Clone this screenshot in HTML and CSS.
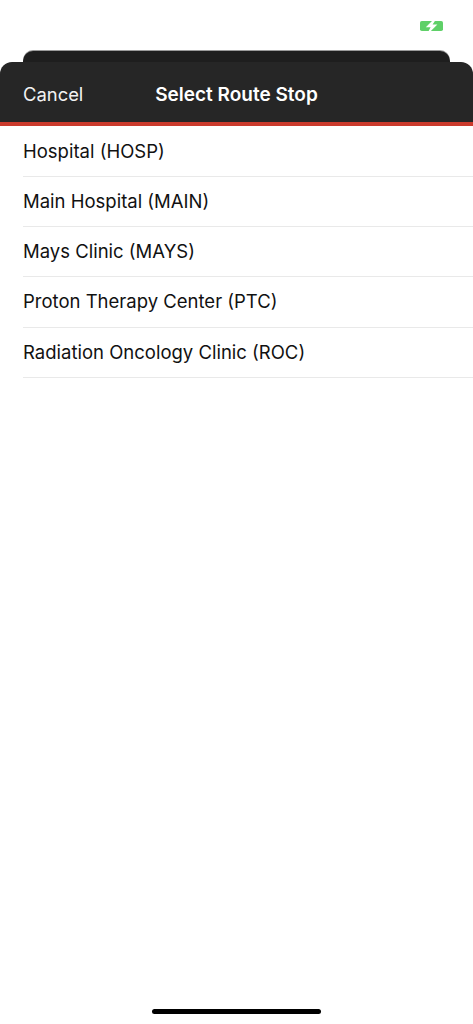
FILE: index.html
```html
<!DOCTYPE html>
<html lang="en">
<head>
    <meta charset="UTF-8">
    <meta name="viewport" content="width=device-width, initial-scale=1.0">
    <title>Select Route Stop</title>
    <link rel="stylesheet" href="styles.css">
</head>
<body>
    <div class="screen">
        <div class="status-bar">
            <svg class="battery" width="23" height="10" viewBox="0 0 23 10">
                <rect x="0" y="0" width="23" height="10" rx="1.8" fill="#5fd068"/>
                <path d="M12.5 -0.5 L5.8 6.2 H10.6 L8.4 10.5 H10.4 L17.4 3.6 H12.6 L15.2 -0.5 Z" fill="#fff"/>
            </svg>
        </div>
        <div class="sheet-behind"></div>
        <div class="sheet-header">
            <span class="cancel">Cancel</span>
            <span class="title">Select Route Stop</span>
        </div>
        <div class="accent"></div>
        <ul class="stop-list">
            <li>Hospital (HOSP)</li>
            <li>Main Hospital (MAIN)</li>
            <li>Mays Clinic (MAYS)</li>
            <li>Proton Therapy Center (PTC)</li>
            <li>Radiation Oncology Clinic (ROC)</li>
        </ul>
        <div class="home-indicator"></div>
    </div>
</body>
</html>
```

FILE: styles.css
```css
* { box-sizing: border-box; }
html, body { margin: 0; padding: 0; background: #fff; }
body { font-family: Inter, "Liberation Sans", sans-serif; }
.screen { width: 473px; height: 1024px; display: flex; flex-direction: column; background: #fff; overflow: hidden; }
.status-bar { height: 51px; padding: 21px 30px 0 0; display: flex; justify-content: flex-end; align-items: flex-start; }
.battery { display: block; }
.sheet-behind { height: 11px; margin: 0 23px; background: #1e1e1e; border-radius: 10px 10px 0 0; box-shadow: 0 -1px 0 #9a9a9a; }
.sheet-header { height: 60px; background: #262626; border-radius: 12px 12px 0 0; display: grid; grid-template-columns: 1fr auto 1fr; align-items: baseline; padding: 21px 23px 0; color: #fff; }
.cancel { font-weight: 400; font-size: 18.4px; color: #f2f2f2; }
.title { font-weight: 600; font-size: 19px; }
.accent { height: 4px; background: #cb3a2c; flex: none; }
.stop-list { list-style: none; margin: 0; padding: 1px 0 0 23px; }
.stop-list li { height: 50.15px; line-height: 48px; font-size: 18.5px; color: #111; border-bottom: 1px solid #e9e9e9; }
.home-indicator { width: 169px; height: 5px; margin: auto auto 10px; background: #000; border-radius: 3px; }
```
